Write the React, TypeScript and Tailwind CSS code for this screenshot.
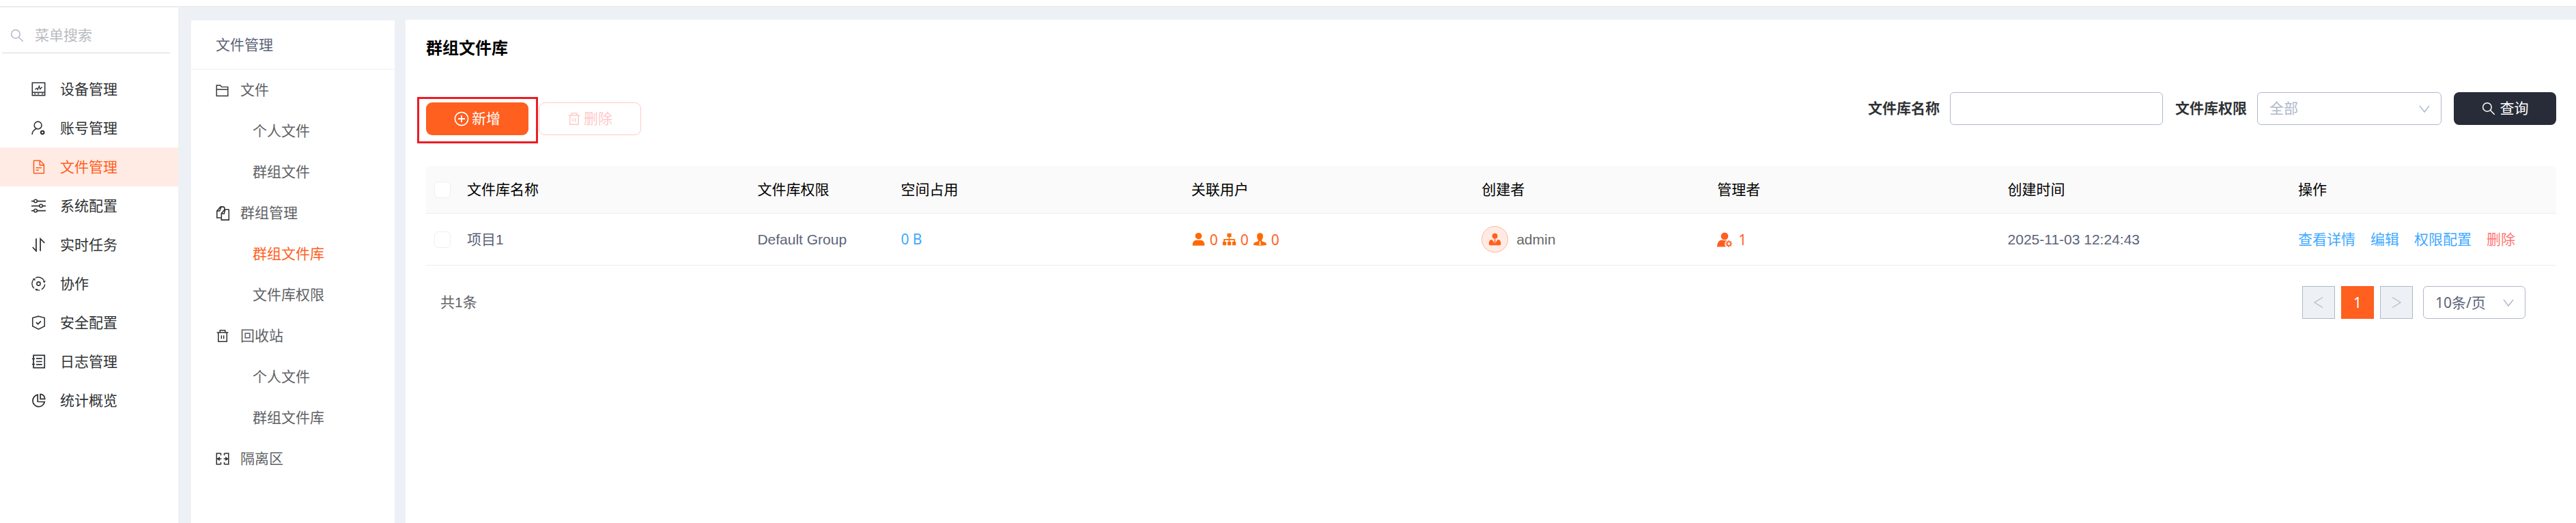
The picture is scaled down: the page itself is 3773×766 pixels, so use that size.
import type { ReactNode } from 'react'
import clsx from 'clsx'

// 线性图标外壳，统一 24 网格
function LineIcon({ className, children }: { className?: string; children: ReactNode }) {
  return (
    <svg
      viewBox="0 0 24 24"
      fill="none"
      stroke="currentColor"
      strokeWidth={1.8}
      className={clsx('flex-shrink-0', className)}
      aria-hidden="true"
    >
      {children}
    </svg>
  )
}

function FillIcon({ className, children }: { className?: string; children: ReactNode }) {
  return (
    <svg viewBox="0 0 24 24" fill="currentColor" className={clsx('flex-shrink-0', className)} aria-hidden="true">
      {children}
    </svg>
  )
}

const SearchIcon = ({ className }: { className: string }) => (
  <LineIcon className={className}>
    <circle cx="9.5" cy="9.5" r="7.5" />
    <path d="M15 15l7.5 7.5" />
  </LineIcon>
)

const TrashIcon = ({ className }: { className: string }) => (
  <LineIcon className={className}>
    <path d="M2 6h20M4.5 6v16h15V6M7.5 6V2h9v4M10 11v6M14 11v6" />
  </LineIcon>
)

const ChevronDown = () => (
  <svg
    viewBox="0 0 16 12"
    fill="none"
    stroke="currentColor"
    strokeWidth={1.4}
    className="pointer-events-none absolute right-[17px] top-[19px] h-3 w-4 text-[#afb8ca]"
    aria-hidden="true"
  >
    <path d="M1 1l7 9 7-9" />
  </svg>
)

const mainMenu = [
  {
    label: '设备管理',
    icon: (
      <>
        <path d="M1.5 1.5h21v21h-21zM1.5 17.5h21" />
        <path d="M6 12.5l3-2 1.5 2.5L13 7l1.5 5 3.5-3.5" strokeWidth="1.5" />
        <path d="M4.5 20h3M10 20h3M17 20h3" strokeWidth="1.5" />
      </>
    ),
  },
  {
    label: '账号管理',
    icon: (
      <>
        <circle cx="11" cy="7.5" r="6.2" />
        <path d="M8 13.5C4 15 1.5 18 1.2 23" />
        <circle cx="18.5" cy="19.5" r="2.6" strokeWidth="2.4" />
      </>
    ),
  },
  {
    label: '文件管理',
    icon: (
      <>
        <path d="M4 1.5h10.5L21 8v14.5H4z" strokeLinejoin="round" />
        <path d="M14 1.5V9h7M7.5 13.5h9.5M7.5 17.5h5" />
      </>
    ),
  },
  {
    label: '系统配置',
    icon: (
      <>
        <path d="M0 4h4M10 4h14M0 12h13M19 12h5M0 20h4M10 20h14" strokeWidth="2" />
        <circle cx="7" cy="4" r="2.6" />
        <circle cx="16" cy="12" r="2.6" />
        <circle cx="7" cy="20" r="2.6" />
      </>
    ),
  },
  {
    label: '实时任务',
    icon: <path d="M2 16l6 6.5V1.5M15 22.5V2l7 7" strokeWidth="2" />,
  },
  {
    label: '协作',
    icon: (
      <>
        <circle cx="12" cy="12" r="3" />
        <path
          d="M7 2.2a11 11 0 0 1 14 4.3M22.5 13a10.8 10.8 0 0 1-5.5 8.5M14 22.8a11 11 0 0 1-6-.6M4.5 20A11 11 0 0 1 3.5 5"
          strokeWidth="1.6"
        />
        <path d="M2 3.500l4.500-.5-.5 4.500zM19 7h5l-2.500 4zM6 20.500l5 .2-3 3.300z" fill="currentColor" stroke="none" />
      </>
    ),
  },
  {
    label: '安全配置',
    icon: (
      <>
        <path d="M12 1.300l10 2.700v14l-10 5-10-5V4z" />
        <path d="M8 11.500l3 3 5-5" strokeWidth="2" />
      </>
    ),
  },
  {
    label: '日志管理',
    icon: (
      <>
        <path d="M3.500 1.500H22v21H3.500z" strokeWidth="2" />
        <path d="M1 7.500h5M1 16.500h5M8 7h10M8 12h10M8 17h10" />
      </>
    ),
  },
  {
    label: '统计概览',
    icon: (
      <>
        <path d="M10.500 2.500a10 10 0 1 0 11.500 12l-11.500-.5z" strokeWidth="2" />
        <path d="M15 1.500v8h7.500c0-4.500-3-8-7.500-8z" strokeWidth="2" />
      </>
    ),
  },
]

const fileMenu = [
  {
    label: '文件',
    icon: (
      <LineIcon className="size-[19px]">
        <path d="M1.500 22V2.500h7L11 5.500h11.500V22zM1.500 10h21" />
      </LineIcon>
    ),
    children: ['个人文件', '群组文件'],
  },
  {
    label: '群组管理',
    icon: (
      <LineIcon className="size-[21px]">
        <path d="M9 19.500H2V8l6-7h4c2 0 3 1 3 4M2 8h4.500L9 1.500" />
        <path d="M22 6v17H9.500V12L15 5.500h6.500zM9.500 12.500H14l1.500-6.500" />
      </LineIcon>
    ),
    children: ['群组文件库', '文件库权限'],
  },
  {
    label: '回收站',
    icon: <TrashIcon className="size-5" />,
    children: ['个人文件', '群组文件库'],
  },
  {
    label: '隔离区',
    icon: (
      <LineIcon className="size-5">
        <path d="M9 2.500H1.500v19H9M9 2.500V6M9 18v3.500M15 2.500h7.500v19H15M15 2.500V6M15 18v3.500" />
        <path d="M2 12h8M14 12h8" />
        <path d="M7 8v8l-5-4zM17 8v8l5-4z" fill="currentColor" stroke="none" />
      </LineIcon>
    ),
    children: [],
  },
]

const columns = [
  { title: '文件库名称', width: '' },
  { title: '文件库权限', width: 'w-[210px]' },
  { title: '空间占用', width: '' },
  { title: '关联用户', width: '' },
  { title: '创建者', width: 'w-[345px]' },
  { title: '管理者', width: '' },
  { title: '创建时间', width: '' },
  { title: '操作', width: 'w-[390px]' },
]

const rows = [
  {
    name: '项目1',
    permission: 'Default Group',
    size: '0 B',
    users: 0,
    orgs: 0,
    roles: 0,
    creator: 'admin',
    managers: 1,
    createdAt: '2025-11-03 12:24:43',
  },
]

const latin = "font-['Noto_Sans','Noto_Sans_CJK_SC',sans-serif]"

function Sidebar() {
  return (
    <aside className="w-[261px] flex-shrink-0 bg-white">
      <label className="ml-[3px] mr-3 flex h-[67px] items-center gap-4 border-b border-[#d6d8dc] pl-3 pt-4">
        <SearchIcon className="size-5 text-[#afb8ca]" />
        <input
          type="search"
          aria-label="菜单搜索"
          placeholder="菜单搜索"
          className="w-full min-w-0 bg-transparent outline-none placeholder:text-[#b8bbc0]"
        />
      </label>
      <nav className="pt-6">
        {mainMenu.map((item) => (
          <a
            key={item.label}
            href="#"
            className={clsx(
              'flex h-[57px] items-center gap-[21px] pl-[46px]',
              item.label === '文件管理' ? 'bg-[#ffebe4] text-[#ff5f1f]' : 'text-[#2f3235]',
            )}
          >
            <LineIcon className="size-[21px]">{item.icon}</LineIcon>
            {item.label}
          </a>
        ))}
      </nav>
    </aside>
  )
}

function FilePanel() {
  return (
    <aside className="ml-[19px] mt-[19px] w-[298px] flex-shrink-0 bg-white">
      <h2 className="flex h-[72px] items-center border-b border-[#eff0f3] pl-9 text-[#5c6377]">文件管理</h2>
      <nav>
        {fileMenu.map((group) => (
          <div key={group.label}>
            <a href="#" className="flex h-[60px] items-center pl-9 text-[#606266]">
              <span className="flex w-9 text-[#2f3235]">{group.icon}</span>
              {group.label}
            </a>
            {group.children.map((child) => (
              <a
                key={child}
                href="#"
                className={clsx(
                  'flex h-[60px] items-center pl-[90px]',
                  group.label === '群组管理' && child === '群组文件库' ? 'text-[#ff5f1f]' : 'text-[#606266]',
                )}
              >
                {child}
              </a>
            ))}
          </div>
        ))}
      </nav>
    </aside>
  )
}

function Toolbar() {
  return (
    <div className="mt-11 flex items-start justify-between">
      <div className="flex gap-[15px] pt-[15px]">
        <div className="relative">
          <button
            type="button"
            className="flex h-12 w-[150px] items-center justify-center gap-1 rounded-[9px] bg-[#ff5f1f] text-white"
          >
            <LineIcon className="size-[22px]">
              <circle cx="12" cy="12" r="10.500" />
              <path d="M12 6.500v11M6.500 12h11" strokeWidth="2" />
            </LineIcon>
            新增
          </button>
          {/* 操作提示红框 */}
          <span className="pointer-events-none absolute -bottom-3 -left-[13px] -right-[14px] -top-2 border-[3px] border-[#ed1c24]" />
        </div>
        <button
          type="button"
          disabled
          className="flex h-12 w-[150px] items-center justify-center gap-1 rounded-[9px] border border-[#ffc9c9] text-[#ffc9c9]"
        >
          <TrashIcon className="size-5" />
          删除
        </button>
      </div>

      <form className="flex items-center" onSubmit={(e) => e.preventDefault()}>
        <label htmlFor="lib-name" className="mr-[15px] font-bold text-[#2f3235]">
          文件库名称
        </label>
        <input id="lib-name" className="mr-[18px] h-12 w-[312px] rounded-md border border-[#afb8ca] px-4 outline-none" />
        <label htmlFor="lib-permission" className="mr-[15px] font-bold text-[#2f3235]">
          文件库权限
        </label>
        <div className="relative mr-[18px]">
          <select
            id="lib-permission"
            className="h-12 w-[270px] appearance-none rounded-md border border-[#afb8ca] bg-white px-[17px] text-[#afb8ca] outline-none"
          >
            <option>全部</option>
          </select>
          <ChevronDown />
        </div>
        <button
          type="submit"
          className="flex h-12 w-[150px] items-center justify-center gap-[7px] rounded-lg bg-[#282c38] text-white"
        >
          <SearchIcon className="size-5" />
          查询
        </button>
      </form>
    </div>
  )
}

function Check({ label }: { label: string }) {
  return (
    <input
      type="checkbox"
      aria-label={label}
      className="block size-6 appearance-none rounded-md border border-[#eceff5] bg-white"
    />
  )
}

function LibraryTable() {
  return (
    <table className="mt-[45px] w-full table-fixed border-separate border-spacing-0 text-left">
      <thead>
        <tr className="h-[70px] text-black [&>th]:border-b [&>th]:border-[#ededef] [&>th]:bg-[#fafafa]">
          <th className="w-12 rounded-tl-lg pl-3">
            <Check label="全选" />
          </th>
          {columns.map((col) => (
            <th key={col.title} className={clsx('px-3 font-normal last:rounded-tr-lg', col.width)}>
              {col.title}
            </th>
          ))}
        </tr>
      </thead>
      <tbody>
        {rows.map((row) => (
          <tr key={row.name} className="h-[76px] text-[#5c6377] [&>td]:border-b [&>td]:border-[#ededef] [&>td]:px-3">
            <td>
              <Check label={row.name} />
            </td>
            <td>{row.name}</td>
            <td>{row.permission}</td>
            <td>
              <a href="#" className={clsx('text-[#40a9ff]', latin)}>
                {row.size}
              </a>
            </td>
            <td>
              <div className={clsx('flex items-center gap-[6px] text-[#ff5f1f]', latin)}>
                <FillIcon className="size-[21px] text-[#ff6a00]">
                  <ellipse cx="12" cy="6.500" rx="5.600" ry="5.500" />
                  <path d="M2 22.500c-.5-5.500 2-8.500 6-9h8c4 .5 6.500 3.500 6 9z" />
                </FillIcon>
                <span>{row.users}</span>
                <FillIcon className="size-[21px] text-[#ff6a00]">
                  <path d="M8.500 2h7v6h-2.700v3.500h8.700V16H23v6h-6v-6h2.500v-2.500h-6.700V16H15v6H9v-6h2v-2.500H4.500V16H7v6H1v-6h1.500v-4.500H11V8H8.500z" />
                </FillIcon>
                <span>{row.orgs}</span>
                <FillIcon className="size-[21px] text-[#ff6a00]">
                  <path d="M12 1.500c3.500 0 5.500 2.500 5 6-.2 3-1 4.500-2.200 6 .2 2 1.700 2.500 4 3 3 .6 4.200 2.500 4.200 5-7 1.300-15 1.300-22 0 0-2.500 1.200-4.400 4.200-5 2.300-.5 3.800-1 4-3C8 12 7.200 10.500 7 7.500c-.5-3.500 1.500-6 5-6z" />
                  <path d="M10.800 15.500h2.400l-.5 2 .8 3.500h-3l.8-3.500z" fill="#fff" />
                </FillIcon>
                <span>{row.roles}</span>
              </div>
            </td>
            <td>
              <div className="flex items-center gap-3 text-[#666]">
                <span className="flex size-[39px] items-center justify-center rounded-full border border-[#ffb696] bg-[#ffebe4] text-[#ff5f1f]">
                  <FillIcon className="size-[19px]">
                    <circle cx="12" cy="6" r="5" />
                    <path d="M6.500 12.200L12 20l5.500-7.800c4 .8 5.500 3 5.500 7.300 0 2.500-.5 3.500-2 3.500H3c-1.500 0-2-1-2-3.500 0-4.300 1.500-6.500 5.500-7.300z" />
                    <path d="M10.300 12h3.400l-1 2 .8 3L12 18.800 10.500 17l.8-3z" />
                  </FillIcon>
                </span>
                {row.creator}
              </div>
            </td>
            <td>
              <div className={clsx('flex items-center gap-[9px] text-[#ff5f1f]', latin)}>
                <FillIcon className="size-[22px]">
                  <circle cx="12" cy="6.500" r="5.900" />
                  <path d="M0 23.500c0-6 2.500-10.500 8-11.200 2 1 5 1.300 7.500.4-3.500 3-4 7-1.800 10.800z" />
                  <circle cx="18.800" cy="18.500" r="2.900" fill="none" stroke="currentColor" strokeWidth="1.700" />
                  <path
                    d="M18.800 13v2M18.800 22v2M13.500 18.500h1.800M22.200 18.500H24M15 14.700l1.300 1.300M21.300 21l1.300 1.300M22.600 14.700L21.300 16M15 22.300l1.300-1.300"
                    stroke="currentColor"
                    strokeWidth="1.800"
                  />
                </FillIcon>
                <span>{row.managers}</span>
              </div>
            </td>
            <td>{row.createdAt}</td>
            <td>
              <div className="flex gap-[22px] text-[#40a9ff]">
                <a href="#">查看详情</a>
                <a href="#">编辑</a>
                <a href="#">权限配置</a>
                <a href="#" className="text-[#ff7875]">
                  删除
                </a>
              </div>
            </td>
          </tr>
        ))}
      </tbody>
    </table>
  )
}

function Pagination() {
  const arrow = 'flex size-12 items-center justify-center border border-[#afb8ca] bg-[#edf1f6] text-[#b9bcc2]'
  return (
    <div className="mt-[30px] flex items-center pl-[21px] pr-[45px]">
      <span className="text-[#606266]">共1条</span>
      <div className="ml-auto flex gap-[9px]">
        <button type="button" aria-label="上一页" disabled className={arrow}>
          <LineIcon className="size-[18px]">
            <path d="M20 2L4 12l16 10" />
          </LineIcon>
        </button>
        <button type="button" className={clsx('size-12 bg-[#ff5f1f] text-white', latin)}>
          1
        </button>
        <button type="button" aria-label="下一页" disabled className={arrow}>
          <LineIcon className="size-[18px]">
            <path d="M4 2l16 10L4 22" />
          </LineIcon>
        </button>
      </div>
      <div className="relative ml-[15px]">
        <select
          aria-label="每页条数"
          className={clsx(
            'h-12 w-[150px] appearance-none rounded-md border border-[#afb8ca] bg-white px-[17px] text-[#5c6377] outline-none',
            latin,
          )}
        >
          <option>10条/页</option>
        </select>
        <ChevronDown />
      </div>
    </div>
  )
}

export default function App() {
  return (
    <div className="flex min-h-screen flex-col bg-[#edf1f6] font-['Liberation_Sans','Noto_Sans_CJK_SC',sans-serif] text-[21px] leading-[30px]">
      <header className="h-[10px] border-b border-[#e4e6ea] bg-white" />
      <div className="flex flex-1 pt-px">
        <Sidebar />
        <FilePanel />
        <main className="ml-4 mt-[18px] min-w-0 flex-1 bg-white pl-[30px] pr-[29px] pt-[22px]">
          <h1 className="text-2xl font-bold leading-10 text-black">群组文件库</h1>
          <Toolbar />
          <LibraryTable />
          <Pagination />
        </main>
      </div>
    </div>
  )
}
